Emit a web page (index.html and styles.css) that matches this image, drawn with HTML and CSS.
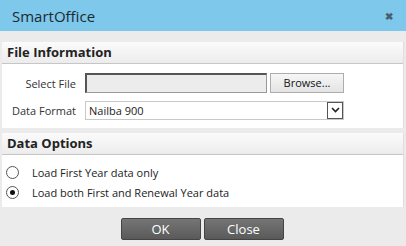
FILE: index.html
```html
<!DOCTYPE html>
<html>
<head>
<meta charset="utf-8">
<link rel="stylesheet" href="styles.css">
</head>
<body>
<div class="dialog">
  <div class="titlebar">
    <span class="title">SmartOffice</span>
    <span class="close-x">&#x2716;</span>
  </div>
  <div class="content">
    <div class="panel">
      <div class="panel-head">File Information</div>
      <div class="panel-body file-body">
        <div class="row">
          <label class="lbl">Select File</label>
          <div class="file-input"></div>
          <div class="browse">Browse...</div>
        </div>
        <div class="row">
          <label class="lbl">Data Format</label>
          <div class="select">
            <span class="select-text">Nailba 900</span>
            <span class="select-arrow"><svg width="9" height="6" viewBox="0 0 9 6"><path d="M1 1 L4.5 4.5 L8 1" fill="none" stroke="#222" stroke-width="1.6"/></svg></span>
          </div>
        </div>
      </div>
    </div>
    <div class="panel panel2">
      <div class="panel-head">Data Options</div>
      <div class="panel-body opt-body">
        <div class="radio-row"><span class="radio"></span><span class="rtext">Load First Year data only</span></div>
        <div class="radio-row"><span class="radio checked"></span><span class="rtext">Load both First and Renewal Year data</span></div>
      </div>
    </div>
    <div class="buttons">
      <div class="btn">OK</div>
      <div class="btn">Close</div>
    </div>
  </div>
</div>
</body>
</html>
```
FILE: styles.css
```css
html, body { margin: 0; padding: 0; }
body {
  width: 406px; height: 246px; overflow: hidden;
  background: #ebebeb;
  font-family: "Open Sans", sans-serif;
  color: #333;
}
.titlebar {
  height: 31px; background: #7dc8eb;
  display: flex; align-items: center; justify-content: space-between;
  padding: 0 13px 0 12px;
}
.title { font-size: 15px; color: #1e2a30; }
.close-x { font-size: 10px; color: #4b5e6a; font-weight: bold; }
.content { padding: 11px 2px 0 2px; }
.panel { border-right: 1px solid #dedede; }
.panel2 { margin-top: 5px; }
.panel-head {
  height: 21px; line-height: 21px;
  padding-left: 5px;
  font-weight: bold; font-size: 13px; color: #222;
  background: linear-gradient(#fbfbfb, #ececec);
  border-bottom: 1px solid #c6c6c6;
}
.panel-body { background: #fff; }
.file-body { height: 64px; padding-top: 9px; box-sizing: border-box; }
.row { display: flex; align-items: center; height: 20px; margin-bottom: 7px; }
.lbl { width: 74px; text-align: right; font-size: 11px; color: #333; margin-right: 9px; }
.file-input {
  width: 179px; height: 17px;
  background: #ececec;
  border: 1px solid #999; border-top: 2px solid #555; border-left: 2px solid #555;
  box-sizing: content-box;
}
.browse {
  margin-left: 3px; width: 72px; height: 18px;
  border: 1px solid #adadad; background: linear-gradient(#f6f6f6, #e4e4e4);
  font-size: 11px; color: #111; text-align: center; line-height: 18px;
}
.select {
  width: 257px; height: 17px;
  border: 1px solid #c8c8c8; background: #fff;
  display: flex; align-items: center; justify-content: space-between;
}
.select-text { font-size: 11px; color: #222; padding-left: 3px; }
.select-arrow {
  width: 14px; height: 15px; border: 1px solid #555; margin-right: 0;
  display: flex; align-items: center; justify-content: center; background: #fff;
}
.opt-body { height: 52px; padding-top: 7px; box-sizing: border-box; }
.radio-row { display: flex; align-items: center; height: 20px; }
.radio {
  width: 11px; height: 11px; border: 1px solid #555; border-radius: 50%;
  margin-left: 4px; margin-right: 13px; background: #fff; position: relative;
}
.radio.checked::after {
  content: ""; position: absolute; left: 3px; top: 3px; width: 5px; height: 5px;
  border-radius: 50%; background: #111;
}
.rtext { font-size: 11px; color: #222; }
.buttons { display: flex; justify-content: center; gap: 3px; margin-top: 11px; padding-right: 2px; }
.btn {
  width: 78px; height: 20px; border: 1px solid #444; border-radius: 2px;
  background: linear-gradient(#757575, #5a5a5a);
  color: #fff; font-size: 13px; text-align: center; line-height: 20px;
}
```
